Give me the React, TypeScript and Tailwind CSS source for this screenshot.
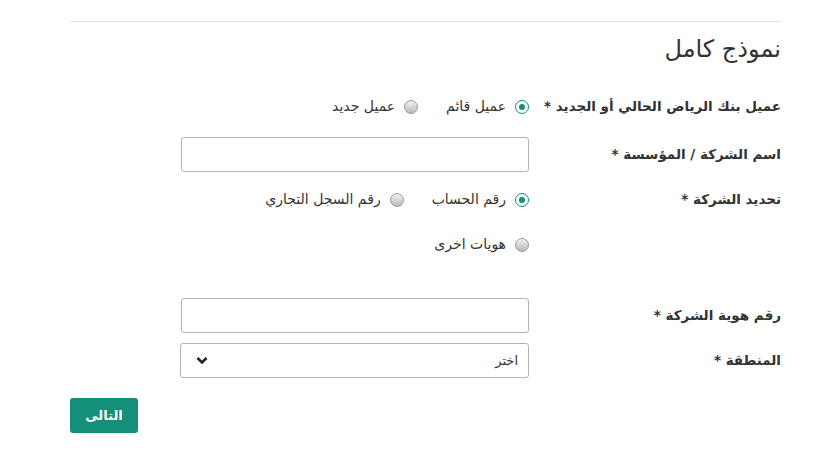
import React from "react";

const Radio = ({ checked, label }: { checked?: boolean; label: string }) => (
  <label className="flex items-center gap-[9px] text-[14px] text-[#333]">
    {checked ? (
      <span className="flex h-[14px] w-[14px] items-center justify-center rounded-full border border-[#138f7a] bg-white">
        <span className="h-[6px] w-[6px] rounded-full bg-[#138f7a]" />
      </span>
    ) : (
      <span className="h-[14px] w-[14px] rounded-full border border-[#9a9a9a] bg-gradient-to-b from-[#f2f2f2] to-[#b9b9b9]" />
    )}
    <span>{label}</span>
  </label>
);

const Row = ({ label, className, children }: { label?: string; className: string; children: React.ReactNode }) => (
  <div className={`flex items-center ${className}`}>
    <div className="w-[252px] shrink-0 whitespace-nowrap text-[13.5px] font-bold text-[#333]">{label}</div>
    <div className="w-[348px]">{children}</div>
  </div>
);

const App = () => {
  return (
    <div className="min-h-[461px] bg-white font-['DejaVu_Sans',sans-serif]">
      <div dir="rtl" className="ml-[70px] w-[711px] pt-[21px]">
        <div className="border-t border-[#e3e3e3]" />
        <h2 className="mt-[11px] text-[24px] leading-8 text-[#333]">نموذج كامل</h2>

        <Row label="عميل بنك الرياض الحالي أو الجديد *" className="mt-6 h-[35px]">
          <div className="flex gap-[28px]">
            <Radio checked label="عميل قائم" />
            <Radio label="عميل جديد" />
          </div>
        </Row>

        <Row label="اسم الشركة / المؤسسة *" className="mt-[13px] h-[35px]">
          <input className="h-[35px] w-full rounded-[3px] border border-[#b3b3b3] px-3 outline-none" />
        </Row>

        <Row label="تحديد الشركة *" className="mt-[10px] h-[35px]">
          <div className="flex gap-[28px]">
            <Radio checked label="رقم الحساب" />
            <Radio label="رقم السجل التجاري" />
          </div>
        </Row>

        <Row className="mt-[10px] h-[35px]">
          <Radio label="هويات اخرى" />
        </Row>

        <Row label="رقم هوية الشركة *" className="mt-[36px] h-[35px]">
          <input className="h-[35px] w-full rounded-[3px] border border-[#b3b3b3] px-3 outline-none" />
        </Row>

        <Row label="المنطقة *" className="mt-[10px] h-[35px]">
          <div className="flex h-[35px] w-[349px] items-center justify-between rounded-[3px] border border-[#b3b3b3] pl-[15px] pr-[10px] text-[13px] text-[#333]">
            <span>اختر</span>
            <svg width="12" height="9" viewBox="0 0 12 9" className="text-[#222]">
              <path d="M1.5 2 L6 6.5 L10.5 2" fill="none" stroke="currentColor" strokeWidth="2.6" />
            </svg>
          </div>
        </Row>

        <div className="mt-[20px] flex">
          <button className="mr-auto h-[35px] w-[68px] rounded-[3px] bg-[#138f7a] text-[13px] font-bold text-white">
            التالى
          </button>
        </div>
      </div>
    </div>
  );
};

export default App;
